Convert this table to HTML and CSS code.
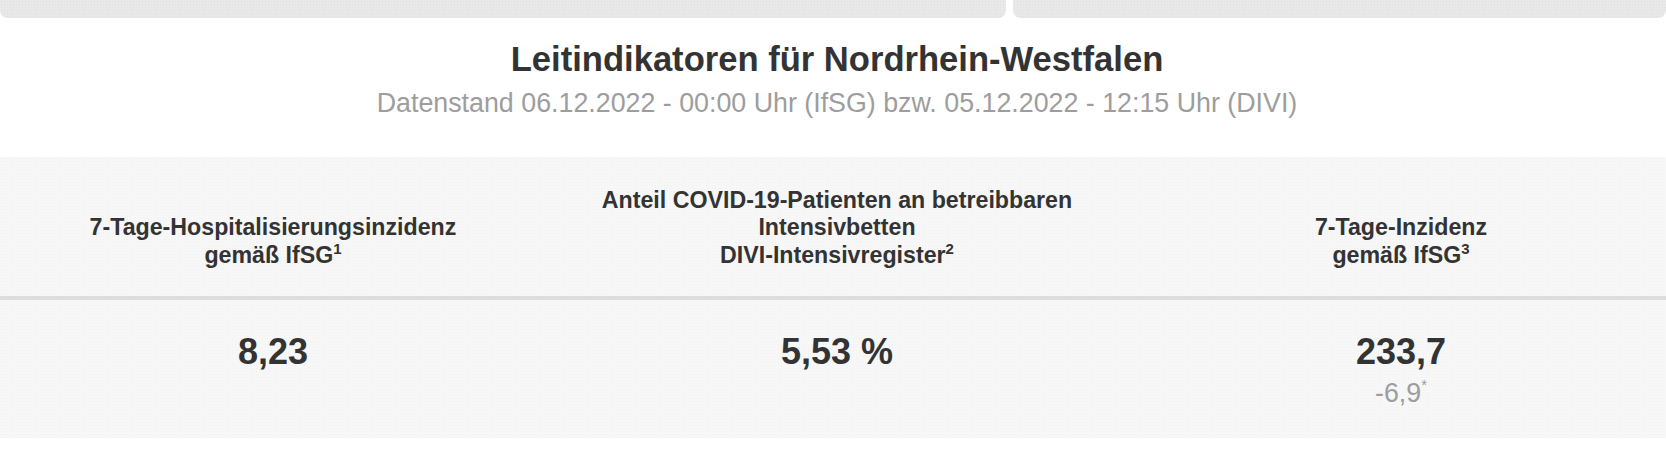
FILE: index.html
```html
<!DOCTYPE html>
<html lang="de">
<head>
<meta charset="utf-8">
<title>Leitindikatoren</title>
<link rel="stylesheet" href="styles.css">
</head>
<body>
<div class="tiles">
  <div class="tile tile-wide"></div>
  <div class="tile tile-rest"></div>
</div>
<main class="page">
  <header class="heading">
    <h1 class="title">Leitindikatoren für Nordrhein-Westfalen</h1>
    <p class="subtitle">Datenstand 06.12.2022 - 00:00 Uhr (IfSG) bzw. 05.12.2022 - 12:15 Uhr (DIVI)</p>
  </header>
  <section class="panel">
    <div class="row row-head">
      <div class="cell head">7-Tage-Hospitalisierungsinzidenz<br>gemäß IfSG<sup>1</sup></div>
      <div class="cell head">Anteil COVID-19-Patienten an betreibbaren<br>Intensivbetten<br>DIVI-Intensivregister<sup>2</sup></div>
      <div class="cell head">7-Tage-Inzidenz<br>gemäß IfSG<sup>3</sup></div>
    </div>
    <div class="row row-values">
      <div class="cell value"><div class="num">8,23</div></div>
      <div class="cell value"><div class="num">5,53 %</div></div>
      <div class="cell value"><div class="num">233,7</div><div class="delta">-6,9<sup>*</sup></div></div>
    </div>
  </section>
</main>
</body>
</html>
```

FILE: styles.css
```css
html, body {
  margin: 0;
  padding: 0;
  background: #ffffff;
}
body {
  font-family: "Liberation Sans", Arial, sans-serif;
  color: #333333;
  width: 1666px;
  height: 466px;
  overflow: hidden;
}
.tiles {
  display: flex;
  gap: 7px;
  height: 18px;
}
.tile {
  background-color: #e8e8e8;
  background-image: radial-gradient(rgba(0,0,0,0.035) 0.8px, transparent 1px);
  background-size: 3px 3px;
  border-radius: 0 0 8px 8px;
}
.tile-wide { width: 1006px; }
.tile-rest { flex: 1; }

/* the page is wider than the window and shown slightly scrolled */
.page {
  width: 1692px;
  margin-left: -9px;
}
.heading {
  text-align: center;
  padding-top: 21px;
}
.title {
  margin: 0;
  font-size: 34.6px;
  line-height: 40px;
  font-weight: 700;
  color: #333333;
}
.subtitle {
  margin: 8px 0 0;
  font-size: 26.8px;
  line-height: 32px;
  color: #9d9d9d;
}
.panel {
  margin-top: 38px;
  background-color: #f7f7f7;
  background-image: radial-gradient(rgba(0,0,0,0.022) 0.8px, transparent 1px);
  background-size: 3px 3px;
}
.row {
  display: grid;
  grid-template-columns: repeat(3, 1fr);
}
.row-head {
  box-sizing: border-box;
  height: 143px;
  border-bottom: 4px solid #dddddd;
}
.cell {
  text-align: center;
}
.head {
  align-self: end;
  padding-bottom: 27px;
  font-size: 23.2px;
  line-height: 27.5px;
  font-weight: 700;
  color: #333333;
}
sup {
  font-size: 15px;
  line-height: 0;
  vertical-align: 9px;
}
.row-values {
  height: 138px;
}
.value {
  padding-top: 30px;
}
.num {
  font-size: 36px;
  line-height: 44px;
  font-weight: 700;
  color: #333333;
}
.delta {
  margin-top: 4px;
  font-size: 26.8px;
  line-height: 30px;
  color: #9d9d9d;
}
.delta sup {
  font-size: 15px;
  vertical-align: 12px;
}
```
